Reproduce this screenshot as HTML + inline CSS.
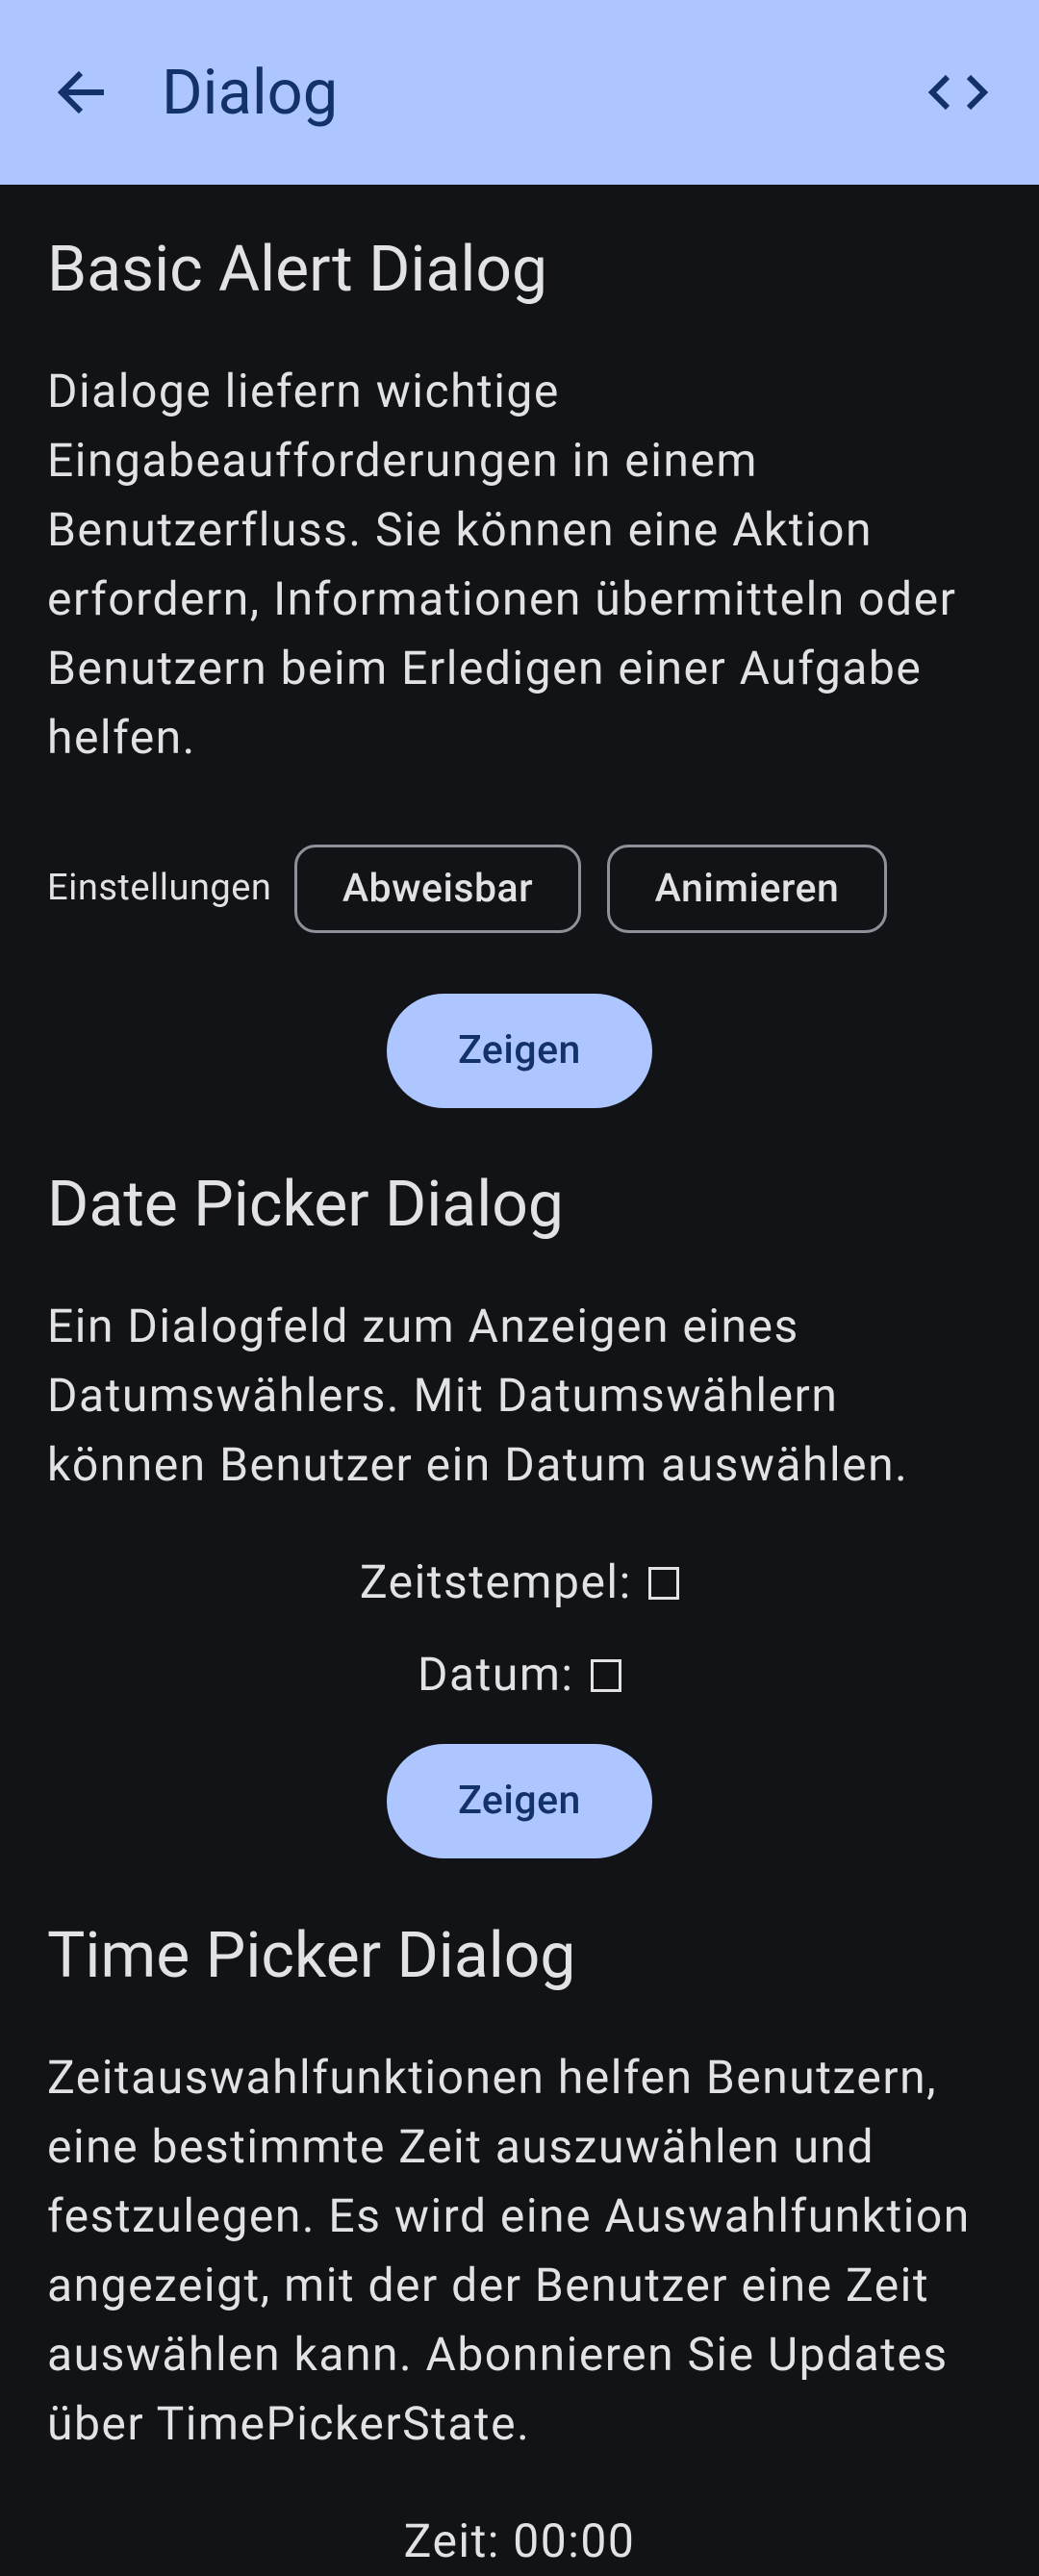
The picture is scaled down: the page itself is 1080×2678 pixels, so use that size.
<!DOCTYPE html>
<html><head><meta charset="utf-8"><style>
*{margin:0;padding:0;box-sizing:border-box}
body{width:1080px;height:2637px;background:#111316;overflow:hidden;position:relative;font-family:"Roboto","Liberation Sans",sans-serif;color:#e2e2e6}
.bar{position:absolute;left:0;top:0;width:1080px;height:192px;background:#adc6ff}
.t{position:absolute;left:168px;top:56px;font-size:65px;line-height:80px;color:#13316b}
.h{position:absolute;left:49px;font-size:66px;line-height:90px;white-space:nowrap}
.p{position:absolute;left:49px;font-size:48px;line-height:72px;letter-spacing:1.5px;white-space:nowrap}
.c{position:absolute;left:0;width:1080px;text-align:center;font-size:48px;line-height:72px;letter-spacing:1.5px}
.box{display:inline-block;width:32px;height:34px;border:3px solid #e2e2e6;vertical-align:-2px;margin-left:4px}
.ob{position:absolute;top:878px;height:92px;border:3px solid #8d9199;border-radius:22px;font-size:41px;font-weight:500;line-height:86px;text-align:center;letter-spacing:0.5px}
.z{position:absolute;left:402px;width:276px;height:119px;border-radius:60px;background:#adc6ff;color:#13316b;font-size:41px;font-weight:500;line-height:119px;text-align:center;letter-spacing:0.5px}
</style></head><body>
<div class="bar">
<svg style="position:absolute;left:56px;top:68px" width="56" height="56" viewBox="0 0 56 56"><path d="M52 28H10M28 8L8 28l20 20" fill="none" stroke="#13316b" stroke-width="6"/></svg>
<div class="t">Dialog</div>
<svg style="position:absolute;left:960px;top:74px" width="72" height="44" viewBox="0 0 72 44"><path d="M25 6L9 22l16 16M47 6l16 16-16 16" fill="none" stroke="#13316b" stroke-width="6"/></svg>
</div>
<div class="h" style="top:236px">Basic Alert Dialog</div>
<div class="p" style="top:371px">Dialoge liefern wichtige</div>
<div class="p" style="top:443px">Eingabeaufforderungen in einem</div>
<div class="p" style="top:515px">Benutzerfluss. Sie können eine Aktion</div>
<div class="p" style="top:587px">erfordern, Informationen übermitteln oder</div>
<div class="p" style="top:659px">Benutzern beim Erledigen einer Aufgabe</div>
<div class="p" style="top:731px">helfen.</div>
<div style="position:absolute;left:49px;top:899px;font-size:38px;line-height:48px;letter-spacing:0.5px">Einstellungen</div>
<div class="ob" style="left:306px;width:298px">Abweisbar</div>
<div class="ob" style="left:631px;width:291px">Animieren</div>
<div class="z" style="top:1033px">Zeigen</div>
<div class="h" style="top:1208px">Date Picker Dialog</div>
<div class="p" style="top:1343px">Ein Dialogfeld zum Anzeigen eines</div>
<div class="p" style="top:1415px">Datumswählers. Mit Datumswählern</div>
<div class="p" style="top:1487px">können Benutzer ein Datum auswählen.</div>
<div class="c" style="top:1609px">Zeitstempel: <span class="box"></span></div>
<div class="c" style="top:1705px">Datum: <span class="box"></span></div>
<div class="z" style="top:1813px">Zeigen</div>
<div class="h" style="top:1989px">Time Picker Dialog</div>
<div class="p" style="top:2124px">Zeitauswahlfunktionen helfen Benutzern,</div>
<div class="p" style="top:2196px">eine bestimmte Zeit auszuwählen und</div>
<div class="p" style="top:2268px">festzulegen. Es wird eine Auswahlfunktion</div>
<div class="p" style="top:2340px">angezeigt, mit der der Benutzer eine Zeit</div>
<div class="p" style="top:2412px">auswählen kann. Abonnieren Sie Updates</div>
<div class="p" style="top:2484px">über TimePickerState.</div>
<div class="c" style="top:2606px">Zeit: 00:00</div>
</body></html>
